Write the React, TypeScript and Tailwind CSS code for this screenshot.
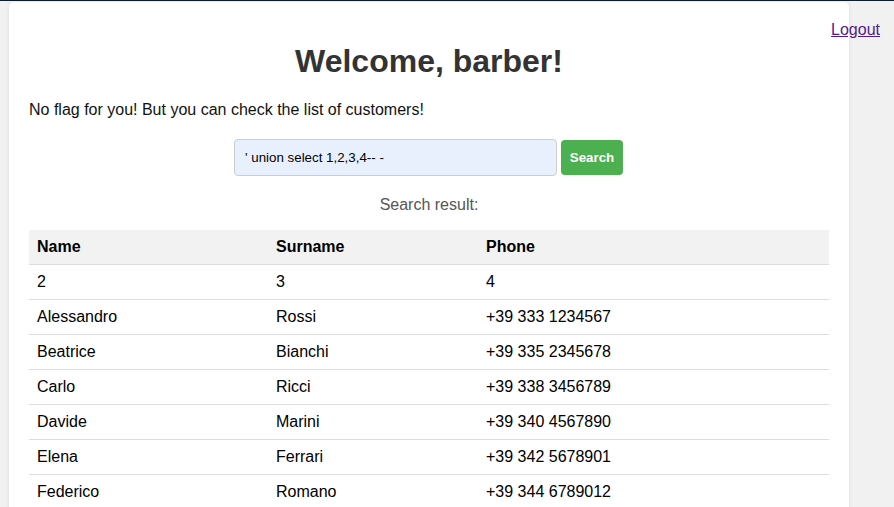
import React from "react";

const rows: [string, string, string][] = [
  ["2", "3", "4"],
  ["Alessandro", "Rossi", "+39 333 1234567"],
  ["Beatrice", "Bianchi", "+39 335 2345678"],
  ["Carlo", "Ricci", "+39 338 3456789"],
  ["Davide", "Marini", "+39 340 4567890"],
  ["Elena", "Ferrari", "+39 342 5678901"],
  ["Federico", "Romano", "+39 344 6789012"],
];

export default function App() {
  return (
    <div
      className="relative min-h-screen bg-[#f1f1f1] border-t border-[#0b1d2a]"
      style={{ fontFamily: '"Liberation Sans", Arial, sans-serif' }}
    >
      <a
        href="#"
        className="absolute top-[17px] right-[14px] text-[16px] text-[#551a8b] underline z-10"
      >
        Logout
      </a>
      <div className="ml-[9px] mt-[1px] w-[840px] bg-white rounded-t-[5px] shadow-[0_0_4px_rgba(0,0,0,0.08)] px-[20px] pt-[20px] pb-[20px]">
        <h1 className="mt-[21px] text-center text-[32px] font-bold text-[#333] leading-[37px]">
          Welcome, barber!
        </h1>
        <p className="mt-[21px] text-[16px] text-[#111] leading-[18px]">
          No flag for you! But you can check the list of customers!
        </p>
        <div className="mt-[20px] flex justify-center items-center">
          <input
            readOnly
            value="' union select 1,2,3,4-- -"
            className="w-[323px] h-[37px] px-[10px] bg-[#e8f0fe] border border-[#ccc] rounded-[4px] text-[13.33px] text-black outline-none"
            style={{ fontFamily: '"Liberation Sans", Arial, sans-serif' }}
          />
          <button className="ml-[4px] mr-[1px] h-[35px] w-[62px] bg-[#4caf50] text-white font-bold text-[13.33px] rounded-[4px]">
            Search
          </button>
        </div>
        <p className="mt-[20px] text-center text-[16px] text-[#555] leading-[18px]">
          Search result:
        </p>
        <table className="mt-[16px] w-[800px] border-collapse text-[16px] text-black">
          <thead>
            <tr className="h-[34px] bg-[#f2f2f2] border-b border-[#ddd]">
              <th className="w-[239px] px-[8px] text-left font-bold">Name</th>
              <th className="w-[210px] px-[8px] text-left font-bold">Surname</th>
              <th className="px-[8px] text-left font-bold">Phone</th>
            </tr>
          </thead>
          <tbody>
            {rows.map((r, i) => (
              <tr key={i} className="h-[35px] border-b border-[#ddd]">
                <td className="px-[8px]">{r[0]}</td>
                <td className="px-[8px]">{r[1]}</td>
                <td className="px-[8px]">{r[2]}</td>
              </tr>
            ))}
          </tbody>
        </table>
      </div>
    </div>
  );
}
